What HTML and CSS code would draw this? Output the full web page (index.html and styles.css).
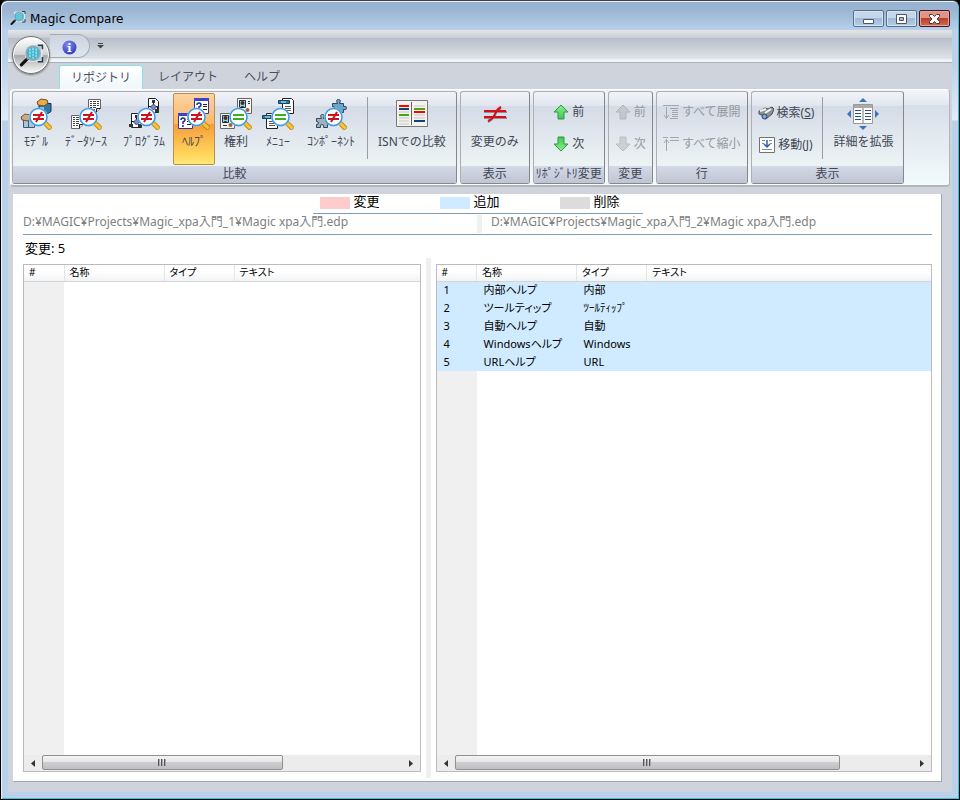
FILE: index.html
```html
<!DOCTYPE html>
<html lang="ja">
<head>
    <meta charset="UTF-8">
    <meta name="viewport" content="width=device-width, initial-scale=1.0">
    <title>Magic Compare</title>
    <link rel="stylesheet" href="styles.css">
</head>
<body>
    <!-- shared icon parts -->
    <svg class="sprite" width="0" height="0">
        <defs>
            <linearGradient id="green" x1="0" y1="0" x2="0" y2="1">
                <stop offset="0" stop-color="#8df08a"/>
                <stop offset="1" stop-color="#3fc552"/>
            </linearGradient>
            <radialGradient id="info" cx="0.4" cy="0.3" r="0.8">
                <stop offset="0" stop-color="#7f8df5"/>
                <stop offset="1" stop-color="#2733b8"/>
            </radialGradient>
            <symbol id="lens" viewBox="0 0 32 32">
                <path d="M24 24l7 7" stroke="#c08a1c" stroke-width="5"/>
                <path d="M24 24l6.500 6.500" stroke="#f8c534" stroke-width="3"/>
                <circle cx="18.500" cy="19" r="9" fill="#fbfdff" stroke="#b4dbf7" stroke-width="1"/>
                <circle cx="18.500" cy="19" r="8.500" fill="none" stroke="#3a9ae2" stroke-width="1.500"/>
            </symbol>
            <symbol id="lens-diff" viewBox="0 0 32 32">
                <use href="#lens"/>
                <path d="M13 17h11M13 21h11M22 14l-6 10" stroke="#cc1420" stroke-width="2" fill="none"/>
            </symbol>
            <symbol id="lens-same" viewBox="0 0 32 32">
                <use href="#lens"/>
                <path d="M13 17h11M13 21h11" stroke="#3fae1c" stroke-width="2"/>
            </symbol>
            <symbol id="page" viewBox="0 0 15 16">
                <path d="M1.500 1.500h12v9l-4 4h-8z" fill="#fff" stroke="#666"/>
                <path d="M13.500 10.500h-4v4" fill="#ddd" stroke="#222"/>
            </symbol>
            <symbol id="sheet" viewBox="0 0 15 16">
                <use href="#page"/>
                <path d="M3 3.500h2M6 3.500h3M10 3.500h2M3 5.500h2M6 5.500h3M10 5.500h2M3 7.500h2M6 7.500h3M10 7.500h2M3 9.500h2M6 9.500h3M3 11.500h2M6 11.500h2" stroke="#444"/>
            </symbol>
            <symbol id="cubes" viewBox="0 0 16 16">
                <path d="M3 7.500l3-2h9v8l-3 2H3z" fill="#2f78a8" stroke="#16364c"/>
                <path d="M4 9h4v6H4z" fill="#8ec3df"/>
                <path d="M1 4l4-3 6 1 1 3-4 3-6-1z" fill="#e5ad4e" stroke="#7a4d12"/>
            </symbol>
            <symbol id="cubes-gray" viewBox="0 0 16 16">
                <path d="M3.500 7.500l3-2h8v9h-11z" fill="#a5c8dc" stroke="#3c586a"/>
                <path d="M8.500 8v7" stroke="#3c586a"/>
                <path d="M1 4l4-3 6 1 1 3-4 3-6-1z" fill="#c9ab84" stroke="#6a5539"/>
            </symbol>
            <symbol id="flow" viewBox="0 0 15 16">
                <path d="M3.500.5h7l3 3v11h-10z" fill="#fff" stroke="#222"/>
                <path d="M8.500 4v4M3.500 12V8.500h9V12" stroke="#111" fill="none"/>
                <path d="M7 2h3v3H7zM1 11h4v3H1zM10 11h4v3h-4z" fill="#333"/>
                <path d="M8.500 6l3 3-3 3-3-3z" fill="#8088d8" stroke="#3c3f80"/>
            </symbol>
            <symbol id="query" viewBox="0 0 15 16">
                <path d="M.5.5h14v15H.5z" fill="#fff" stroke="#2b35a0"/>
                <path d="M0 0h15v3H0z" fill="#3a45c8"/>
                <path d="M3 7q0-2 2-2t2 2q0 1-2 2v2M5 12v2" stroke="#222a90" stroke-width="1.500" fill="none"/>
                <path d="M9 6.500h4M9 8.500h4M9 11.500h4" stroke="#222"/>
            </symbol>
            <symbol id="badge" viewBox="0 0 15 16">
                <path d="M.5.5h14v15H.5z" fill="#f5f5ee" stroke="#666"/>
                <path d="M2.500 2.500h6v7h-6z" fill="#9bd4d8" stroke="#235"/>
                <circle cx="5.500" cy="5" r="2" fill="#4a2d18"/>
                <path d="M3 10q2-4 5 0z" fill="#123"/>
                <path d="M11 3.500h2M11 5.500h2M3 12.500h4" stroke="#333"/>
                <circle cx="10.500" cy="12" r="2" fill="#a3603c"/>
            </symbol>
            <symbol id="menu" viewBox="0 0 16 16">
                <path d="M4.500.5h9l2 2v13h-11z" fill="#fff" stroke="#222"/>
                <path d="M.5 2.500h11v3H.5z" fill="#24799d" stroke="#0d4460"/>
                <path d="M3 4h5" stroke="#d7f3fb"/>
                <path d="M7 8.500h6M7 10.500h6M7 12.500h6" stroke="#555"/>
            </symbol>
            <symbol id="puzzle" viewBox="0 0 16 16">
                <path d="M1.500 5.500h5q-2-4 1-4t1 4h4v3q3-1 3 1.500t-3 1.500v3h-4q1-3-1.500-3t-1.500 3h-4v-3q2 0 2-1.500t-2-1.500z" stroke="#31475a"/>
            </symbol>
            <symbol id="arrow-up" viewBox="0 0 16 16">
                <path d="M8 1l7 7h-4v7H5V8H1z"/>
            </symbol>
            <symbol id="magnify" viewBox="0 0 32 32">
                <path d="M9 4h20v19H9z" fill="#a9d3dd" stroke="#dfe9ee" stroke-width="2"/>
                <path d="M24 3h6v5M30 18v6h-6" fill="none" stroke="#263c4a" stroke-width="2"/>
                <path d="M11 20l-8 8" stroke="#111" stroke-width="4" stroke-linecap="round"/>
                <path d="M13 18l-3 3" stroke="#999" stroke-width="2"/>
                <circle cx="18" cy="13" r="9" fill="#45b4d0" stroke="#9aa9b2" stroke-width="2"/>
                <path d="M14 7v12M18 6v14M22 7v12" stroke="#8fe0ef" stroke-width="2" stroke-dasharray="3 1"/>
            </symbol>
        </defs>
    </svg>

    <div class="window">
        <header class="title-bar">
            <svg class="title-icon" viewBox="0 0 32 32"><use href="#magnify"/></svg>
            <h1 class="title">Magic Compare</h1>
            <div class="window-buttons">
                <button class="window-button" aria-label="最小化">
                    <svg width="13" height="12"><path d="M1.500 6.500h10v4h-10z" fill="#fff" stroke="#4b5667"/></svg>
                </button>
                <button class="window-button" aria-label="最大化">
                    <svg width="13" height="12"><path d="M1.500 1.500h10v9h-10zM4.500 4.500v3h4v-3z" fill="#fff" fill-rule="evenodd" stroke="#4b5667"/></svg>
                </button>
                <button class="window-button close" aria-label="閉じる">
                    <svg width="13" height="12"><path d="M1.500 1.500h3l2 2 2-2h3v2l-2.500 2.500 2.500 2.500v2h-3l-2-2-2 2h-3v-2l2.500-2.500-2.500-2.500z" fill="#fff" stroke="#57363a"/></svg>
                </button>
            </div>
        </header>

        <div class="client">
            <div class="quick-bar">
                <button class="orb" aria-label="アプリケーション">
                    <svg width="25" height="25"><use href="#magnify"/></svg>
                </button>
                <div class="quick-tools">
                    <button class="quick-button" aria-label="情報">
                        <svg width="15" height="15" viewBox="0 0 15 15">
                            <circle cx="7.500" cy="7.500" r="7" fill="url(#info)"/>
                            <path d="M6.500 3h2v2h-2zM5.500 6h3v5h1v1h-4v-1h1V7h-1z" fill="#fff"/>
                        </svg>
                    </button>
                </div>
                <button class="quick-button" aria-label="カスタマイズ">
                    <svg width="7" height="6"><path d="M1 .5h5" stroke="#444"/><path d="M0 2h7L3.500 5.500z" fill="#444"/></svg>
                </button>
            </div>

            <nav class="tabs">
                <button class="tab active">リポジトリ</button>
                <button class="tab">レイアウト</button>
                <button class="tab">ヘルプ</button>
            </nav>

            <div class="ribbon">
                <section class="group">
                    <div class="group-body">
                        <button class="tool">
                            <svg class="tool-icon"><use href="#cubes" x="16" width="16" height="16"/><use href="#cubes-gray" y="15" width="16" height="16"/><use href="#lens-diff"/></svg>
                            ﾓﾃﾞﾙ
                        </button>
                        <button class="tool wide">
                            <svg class="tool-icon"><use href="#sheet" x="17" width="15" height="16"/><use href="#sheet" y="16" width="15" height="16"/><use href="#lens-diff"/></svg>
                            ﾃﾞｰﾀｿｰｽ
                        </button>
                        <button class="tool wide">
                            <svg class="tool-icon"><use href="#flow" x="17" width="15" height="16"/><use href="#flow" y="15" width="15" height="16"/><use href="#lens-diff"/></svg>
                            ﾌﾟﾛｸﾞﾗﾑ
                        </button>
                        <button class="tool selected">
                            <svg class="tool-icon"><use href="#query" x="16" width="15" height="16"/><use href="#query" y="15" width="15" height="16"/><use href="#lens-diff"/></svg>
                            ﾍﾙﾌﾟ
                        </button>
                        <button class="tool">
                            <svg class="tool-icon"><use href="#badge" x="17" width="15" height="16"/><use href="#badge" y="15" width="15" height="16"/><use href="#lens-same"/></svg>
                            権利
                        </button>
                        <button class="tool">
                            <svg class="tool-icon"><use href="#menu" x="16" width="16" height="16"/><use href="#menu" y="15" width="16" height="16"/><use href="#lens-same"/></svg>
                            ﾒﾆｭｰ
                        </button>
                        <button class="tool wide">
                            <svg class="tool-icon"><use href="#puzzle" x="16" width="16" height="16" fill="#6aa5cc"/><use href="#puzzle" y="15" width="16" height="16" fill="#9fb0bf"/><use href="#lens-diff"/></svg>
                            ｺﾝﾎﾟｰﾈﾝﾄ
                        </button>
                        <div class="divider"></div>
                        <button class="tool wide">
                            <svg class="tool-icon" viewBox="0 0 32 32">
                                <path d="M.5 2.500h31v26H.5z" fill="#f4f3ef" stroke="#777"/>
                                <path d="M15.500 4v23" stroke="#666"/>
                                <path d="M3 8h10M18 14h11" stroke="#f00" stroke-width="2"/>
                                <path d="M3 11h10M18 23h11" stroke="#0b447c" stroke-width="2"/>
                                <path d="M3 17h10M18 11h11" stroke="#3fa814" stroke-width="2"/>
                                <path d="M3 14h10M3 20h10M3 23h10M3 26h10M18 8h11M18 17h11M18 20h11" stroke="#dcdcd8" stroke-width="2"/>
                            </svg>
                            ISNでの比較
                        </button>
                    </div>
                    <h2 class="group-label">比較</h2>
                </section>

                <section class="group">
                    <div class="group-body">
                        <button class="tool wide">
                            <svg class="tool-icon" viewBox="0 0 32 32">
                                <path d="M5 14h23M5 20h23M22 10q-4 2-6 7t-7 7" stroke="#8f8f96" stroke-width="2" fill="none"/>
                                <path d="M5 13h22M5 19h22M22 9q-4 2-6 7t-7 7" stroke="#d80d17" stroke-width="2" fill="none"/>
                            </svg>
                            変更のみ
                        </button>
                    </div>
                    <h2 class="group-label">表示</h2>
                </section>

                <section class="group">
                    <div class="group-body stack">
                        <button class="small-tool"><svg class="small-icon" fill="url(#green)" stroke="#2c9a40"><use href="#arrow-up"/></svg>前</button>
                        <button class="small-tool"><svg class="small-icon flip" fill="url(#green)" stroke="#2c9a40"><use href="#arrow-up"/></svg>次</button>
                    </div>
                    <h2 class="group-label">ﾘﾎﾟｼﾞﾄﾘ変更</h2>
                </section>

                <section class="group">
                    <div class="group-body stack">
                        <button class="small-tool" disabled><svg class="small-icon" fill="#c3c6ca" stroke="#b2b5ba"><use href="#arrow-up"/></svg>前</button>
                        <button class="small-tool" disabled><svg class="small-icon flip" fill="#cdd0d2" stroke="#b9bcc0"><use href="#arrow-up"/></svg>次</button>
                    </div>
                    <h2 class="group-label">変更</h2>
                </section>

                <section class="group">
                    <div class="group-body stack">
                        <button class="small-tool" disabled>
                            <svg class="small-icon" fill="none" stroke="#a3a6ab"><path d="M0 1.500h16M3.500 3v11M1 11l2.500 3.500L6 11M7 4.500h8M9 6.500h6M9 8.500h6M9 10.500h6M9 12.500h6M7 14.500h8"/></svg>すべて展開
                        </button>
                        <button class="small-tool" disabled>
                            <svg class="small-icon" fill="none" stroke="#a3a6ab"><path d="M0 1.500h5M3.500 4v11M1 7l2.500-3.500L6 7M7 1.500h9M7 4.500h9"/></svg>すべて縮小
                        </button>
                    </div>
                    <h2 class="group-label">行</h2>
                </section>

                <section class="group">
                    <div class="group-body">
                        <div class="stack">
                            <button class="small-tool">
                                <svg class="small-icon">
                                    <path d="M1 6l6-3 3 1 4-2 2 2-2 5-6 5-3-1-1-3-3-1z" fill="#8d9196" stroke="#4a4d52"/>
                                    <path d="M2 6l6-2M7 8l6-4" stroke="#f3f3f3" stroke-width="2"/>
                                    <circle cx="6.500" cy="11.500" r="2.500" fill="#79a7dd" stroke="#30496b"/>
                                </svg>
                                <span>検索(<u>S</u>)</span>
                            </button>
                            <button class="small-tool">
                                <svg class="small-icon">
                                    <path d="M.5.5h15v15H.5z" fill="#fff" stroke="#6e737a"/>
                                    <path d="M3 3.500h3M10 3.500h3M3 6.500h2M11 6.500h2M3 12.500h10" stroke="#888"/>
                                    <path d="M8 3v6M5 7l3 3 3-3" stroke="#2864a8" stroke-width="1.500" fill="none"/>
                                </svg>
                                <span>移動(<u>J</u>)</span>
                            </button>
                        </div>
                        <div class="divider"></div>
                        <button class="tool wide">
                            <svg class="tool-icon" viewBox="0 0 32 32">
                                <path d="M6.500 6.500h19v19h-19z" fill="#fff" stroke="#999"/>
                                <path d="M7 7h18v3H7z" fill="#aaa"/>
                                <path d="M16 10v15" stroke="#777"/>
                                <path d="M8 12.500h6M8 15.500h6M8 18.500h6M8 21.500h6M18 12.500h6M18 15.500h6M18 18.500h6M18 21.500h6" stroke="#28507c"/>
                                <path d="M16 0l4 4h-8zM16 32l4-4h-8zM0 16l4-4v8zM32 16l-4-4v8z" fill="#3f74b8"/>
                            </svg>
                            詳細を拡張
                        </button>
                    </div>
                    <h2 class="group-label">表示</h2>
                </section>
            </div>

            <main class="panel">
                <div class="legend">
                    <div class="legend-item"><span class="swatch changed"></span>変更</div>
                    <div class="legend-item"><span class="swatch added"></span>追加</div>
                    <div class="legend-item"><span class="swatch removed"></span>削除</div>
                </div>
                <div class="paths">
                    <div class="path">D:¥MAGIC¥Projects¥Magic_xpa入門_1¥Magic xpa入門.edp</div>
                    <div class="path-splitter"></div>
                    <div class="path">D:¥MAGIC¥Projects¥Magic_xpa入門_2¥Magic xpa入門.edp</div>
                </div>
                <p class="count">変更: 5</p>

                <div class="lists">
                    <div class="list left">
                        <table class="grid">
                            <thead>
                                <tr><th class="col-no">#</th><th class="col-name">名称</th><th class="col-type">タイプ</th><th>テキスト</th></tr>
                            </thead>
                        </table>
                        <div class="scrollbar">
                            <button class="scroll-arrow" aria-label="左"><svg width="4" height="7"><path d="M4 0v7L0 3.500z" fill="#333"/></svg></button>
                            <div class="track"><div class="thumb" style="width: 67%"><span class="grip"></span></div></div>
                            <button class="scroll-arrow" aria-label="右"><svg width="4" height="7"><path d="M0 0v7l4-3.500z" fill="#333"/></svg></button>
                        </div>
                    </div>
                    <div class="splitter"></div>
                    <div class="list right">
                        <table class="grid">
                            <thead>
                                <tr><th class="col-no">#</th><th class="col-name">名称</th><th class="col-type">タイプ</th><th>テキスト</th></tr>
                            </thead>
                            <tbody>
                                <tr><td>1</td><td>内部ヘルプ</td><td>内部</td><td></td></tr>
                                <tr><td>2</td><td>ツールティップ</td><td>ﾂｰﾙﾃｨｯﾌﾟ</td><td></td></tr>
                                <tr><td>3</td><td>自動ヘルプ</td><td>自動</td><td></td></tr>
                                <tr><td>4</td><td>Windowsヘルプ</td><td>Windows</td><td></td></tr>
                                <tr><td>5</td><td>URLヘルプ</td><td>URL</td><td></td></tr>
                            </tbody>
                        </table>
                        <div class="scrollbar">
                            <button class="scroll-arrow" aria-label="左"><svg width="4" height="7"><path d="M4 0v7L0 3.500z" fill="#333"/></svg></button>
                            <div class="track"><div class="thumb" style="width: 84%"><span class="grip"></span></div></div>
                            <button class="scroll-arrow" aria-label="右"><svg width="4" height="7"><path d="M0 0v7l4-3.500z" fill="#333"/></svg></button>
                        </div>
                    </div>
                </div>
            </main>
        </div>
    </div>
</body>
</html>
```

FILE: styles.css
```css
* { margin: 0; padding: 0; box-sizing: border-box; }

body {
    font-family: "Noto Sans", "Noto Sans CJK JP", sans-serif;
    font-size: 12px;
    line-height: 16px;
    color: #000;
    background: #000;
}

button {
    font: inherit;
    color: inherit;
    background: none;
    border: none;
}

svg {
    display: block;
}

.sprite {
    position: absolute;
}

.window {
    display: flex;
    flex-direction: column;
    min-height: 100vh;
    padding: 0 6px 7px;
    border: 1px solid #000;
    border-top-color: #3b3f48;
    border-radius: 7px 7px 0 0;
    box-shadow: inset 1px 1px 0 #eaf3fc, inset -1px -1px 0 #2fc6e0;
    background: linear-gradient(#99b4d1 0, #99b4d1 8px, #b9d1ea 30px, #b9d1ea 60px, #e0ecf8 119px, #b9d1ea 120px);
}

.title-bar {
    display: flex;
    height: 29px;
    padding: 9px 3px 0;
}

.title-icon {
    width: 16px;
    height: 16px;
    margin-right: 4px;
}

.title {
    flex: 1;
    font-family: "DejaVu Sans", sans-serif;
    font-size: 12px;
    font-weight: 400;
    line-height: 18px;
}

.window-buttons {
    display: flex;
    gap: 2px;
}

.window-button {
    display: flex;
    align-items: center;
    justify-content: center;
    width: 31px;
    height: 17px;
    border: 1px solid #55708f;
    border-radius: 2px;
    box-shadow: inset 0 0 0 1px #d7e5f3;
    background: linear-gradient(#c3d6ea 50%, #9fb9d6 50%, #b7cee6);
}

.window-button.close {
    border-color: #4b1220;
    box-shadow: inset 0 0 0 1px #e5a79b;
    background: linear-gradient(#dd9586 50%, #b9412b 50%, #cf6f52);
}

.client {
    display: flex;
    flex-direction: column;
    flex: 1;
    margin: 0 1px;
    background: #cfd4dc;
}

.quick-bar {
    position: relative;
    display: flex;
    gap: 7px;
    height: 33px;
    padding: 4px 0 0 42px;
    border-bottom: 1px solid #a9b0ba;
    background: linear-gradient(#e3e5e8, #c8ccd2 8px, #b6bec9 8px, #dde1e7 28px, #f2f5fa 30px);
}

.orb {
    position: absolute;
    left: 4px;
    top: 6px;
    display: flex;
    align-items: center;
    justify-content: center;
    width: 38px;
    height: 38px;
    border: 1px solid #6d7178;
    border-radius: 50%;
    box-shadow: inset 0 0 0 1px #fff, 0 1px 2px #777;
    background: linear-gradient(#fff, #d4d4d6 48%, #a7a8ab 52%, #fafafa);
}

.quick-tools {
    display: flex;
    width: 40px;
    height: 24px;
    padding-left: 12px;
    border: 1px solid #a4abb7;
    border-left: none;
    border-radius: 0 12px 12px 0;
    background: linear-gradient(#ccd4e0, #dfe5ee);
}

.quick-button {
    display: flex;
    align-items: center;
    height: 24px;
}

.tabs {
    display: flex;
    gap: 4px;
    height: 26px;
    padding: 2px 0 0 51px;
}

.tab {
    padding: 0 11px;
    color: #4a5260;
}

.tab.active {
    border: 1px solid #8ee0e6;
    border-bottom: none;
    border-radius: 3px 3px 0 0;
    background: linear-gradient(#fff, #f0f6fb);
}

.ribbon {
    display: flex;
    gap: 3px;
    height: 98px;
    margin: 0 2px;
    padding: 1px;
    border: 1px solid #fff;
    border-bottom: 2px solid #b2b5ba;
    border-right-color: #b2b5ba;
    border-radius: 4px;
    background: linear-gradient(#f3f5fa, #e1e6f0 15px, #d8dee9 15px, #f2fbfb);
}

.group {
    display: flex;
    flex-direction: column;
    border: 1px solid #adafb3;
    border-right-color: #85878c;
    border-bottom-color: #85878c;
    border-radius: 3px;
    background: linear-gradient(#f1f3f8, #e0e5ef 14px, #d4dbe7 14px, #edf4f4 74px);
}

.group-body {
    display: flex;
    flex: 1;
    padding: 1px 2px;
}

.stack {
    display: flex;
    flex-direction: column;
    padding-top: 4px;
}

.group-label {
    height: 17px;
    padding: 0 2px;
    font-size: 12px;
    font-weight: 400;
    text-align: center;
    color: #3f4654;
    background: linear-gradient(#d4d9e8, #c0c5d3);
}

.tool {
    display: flex;
    flex-direction: column;
    align-items: center;
    gap: 4px;
    height: 72px;
    padding: 4px;
    border: 1px solid transparent;
    color: #3f4654;
    white-space: nowrap;
}

.tool.wide {
    padding: 4px 7px;
}

.tool.selected {
    border-color: #b98f4d;
    border-radius: 2px;
    background: linear-gradient(#fbd3a3, #fbb868 30px, #f79b3c 30px, #ffd65a 60px, #ffe87a);
}

.tool-icon {
    width: 32px;
    height: 32px;
}

.divider {
    width: 1px;
    height: 62px;
    margin: 4px 2px 4px 4px;
    background: #9a9da4;
}

.small-tool {
    display: flex;
    align-items: center;
    justify-content: center;
    gap: 3px;
    height: 32px;
    padding: 0 4px;
    color: #3f4654;
    white-space: nowrap;
}

.small-tool:disabled {
    color: #96999e;
}

.small-icon {
    width: 16px;
    height: 16px;
}

.flip {
    transform: rotate(180deg);
}

.panel {
    display: flex;
    flex-direction: column;
    flex: 1;
    margin: 7px 10px 10px 5px;
    padding: 0 9px 3px 10px;
    border-right: 1px solid #a2a5a9;
    border-bottom: 1px solid #a2a5a9;
    background: #fff;
}

.legend {
    display: flex;
    align-self: center;
    width: 330px;
    height: 20px;
    padding-left: 7px;
    border-bottom: 1px solid #7f9db9;
    font-size: 13px;
    line-height: 14px;
}

.legend-item {
    display: flex;
    flex-shrink: 0;
    gap: 4px;
    width: 120px;
}

.legend-item:last-child {
    width: auto;
}

.swatch {
    width: 30px;
    height: 12px;
    margin-top: 3px;
}

.changed { background: #ffcccc; }
.added { background: #d0ebff; }
.removed { background: #dcdcdc; }

.paths {
    display: flex;
    height: 21px;
    border-bottom: 1px solid #7f9db9;
    color: #808080;
}

.path {
    flex: 1;
    white-space: nowrap;
}

.path-splitter {
    width: 5px;
    height: 18px;
    margin: 1px 9px 0 13px;
    background: #f0f0f0;
}

.count {
    height: 23px;
    padding: 5px 2px 0;
    font-size: 13px;
}

.lists {
    display: flex;
    flex: 1;
}

.list {
    display: flex;
    flex-direction: column;
    justify-content: space-between;
    margin: 6px 0;
    border: 1px solid #b9bbbd;
    background: linear-gradient(90deg, #f0f0f0 40px, #fff 40px);
}

.list.left { flex: 4; }
.list.right { flex: 5; }

.splitter {
    width: 5px;
    margin: 0 5px;
    background: #f0f0f0;
}

.grid {
    width: 100%;
    table-layout: fixed;
    border-collapse: collapse;
    font-feature-settings: "palt";
    font-size: 11px;
}

.grid th {
    height: 16px;
    padding: 0 5px;
    border-right: 1px solid #e3e4e6;
    border-bottom: 1px solid #d5d5d5;
    font-size: 10px;
    font-weight: 400;
    line-height: 15px;
    text-align: left;
    background: linear-gradient(#fff 40%, #f2f3f5);
}

.grid th:last-child {
    border-right: none;
}

.grid td {
    height: 18px;
    padding: 0 7px;
    background: #d0ebff;
}

.col-no { width: 40px; }
.col-name { width: 100px; }
.col-type { width: 70px; }

.scrollbar {
    display: flex;
    height: 16px;
    background: #ececec;
}

.scroll-arrow {
    display: flex;
    align-items: center;
    justify-content: center;
    width: 18px;
}

.track {
    flex: 1;
}

.thumb {
    display: flex;
    align-items: center;
    justify-content: center;
    height: 15px;
    border: 1px solid #909090;
    border-radius: 2px;
    background: linear-gradient(#f4f4f4, #e6e6e7 45%, #cfcfd2 45%, #bfbfc3);
}

.grip {
    width: 8px;
    height: 7px;
    background: repeating-linear-gradient(90deg, #555 0, #555 1px, #aaa 1px, #aaa 2px, transparent 2px, transparent 3px);
}
```
